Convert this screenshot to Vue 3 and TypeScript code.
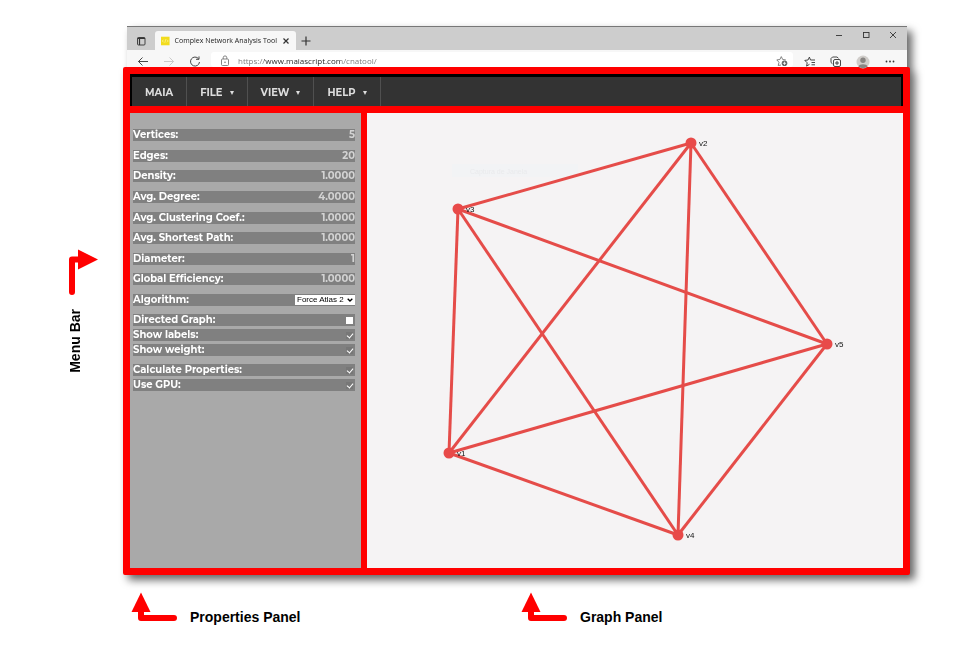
<script setup lang="ts">
import { reactive, ref } from 'vue'

interface Vertex { id: string; x: number; y: number }

const menus: string[] = ['File', 'View', 'Help']

const stats = [
  { label: 'Vertices:', value: '5' },
  { label: 'Edges:', value: '20' },
  { label: 'Density:', value: '1.0000' },
  { label: 'Avg. Degree:', value: '4.0000' },
  { label: 'Avg. Clustering Coef.:', value: '1.0000' },
  { label: 'Avg. Shortest Path:', value: '1.0000' },
  { label: 'Diameter:', value: '1' },
  { label: 'Global Efficiency:', value: '1.0000' },
]

const algorithm = ref('Force Atlas 2')

const optionGroups = reactive([
  [
    { id: 'directed', label: 'Directed Graph:', on: false },
    { id: 'labels', label: 'Show labels:', on: true },
    { id: 'weight', label: 'Show weight:', on: true },
  ],
  [
    { id: 'calculate', label: 'Calculate Properties:', on: true },
    { id: 'gpu', label: 'Use GPU:', on: true },
  ],
])

const vertices: Vertex[] = [
  { id: 'v1', x: 82, y: 340 },
  { id: 'v2', x: 324, y: 30 },
  { id: 'v3', x: 91, y: 96 },
  { id: 'v4', x: 311, y: 422 },
  { id: 'v5', x: 460, y: 231 },
]

// Complete graph: every pair of vertices is joined
const edges = vertices.flatMap((a, i) => vertices.slice(i + 1).map((b) => ({ a, b })))
</script>

<template>
  <main class="figure">
    <div class="side-callout">
      <svg width="32" height="48" viewBox="0 0 32 48" aria-hidden="true">
        <path d="M5 43V10.500H14" class="shaft" />
        <path d="M11 0.500L31 10.500L11 20.500Z" class="head" />
      </svg>
      <span class="caption vertical">Menu Bar</span>
    </div>

    <div class="window">
      <header class="chrome">
        <div class="tabstrip">
          <button class="icon-btn tab-actions" aria-label="Tab actions">
            <svg width="10" height="10" viewBox="0 0 10 10"><rect x="1.500" y="1.500" width="7.500" height="7.500" rx="1" class="line" /><path d="M1.500 2.300H9M3.500 3V9" class="line bold" /></svg>
          </button>
          <div class="tab">
            <svg width="10" height="10" viewBox="0 0 10 10" aria-hidden="true"><rect width="10" height="10" fill="#f2dc1e" /><path d="M3 3.500L1.500 5L3 6.500M7 3.500L8.500 5L7 6.500M5.500 3L4.500 7" stroke="#fff7a8" fill="none" stroke-width=".8" /></svg>
            <span class="tab-title">Complex Network Analysis Tool</span>
            <button class="icon-btn" aria-label="Close tab">
              <svg width="8" height="8" viewBox="0 0 8 8"><path d="M1.500 1.500L6.500 6.500M6.500 1.500L1.500 6.500" class="line bold" /></svg>
            </button>
          </div>
          <button class="icon-btn" aria-label="New tab">
            <svg width="10" height="10" viewBox="0 0 10 10"><path d="M5 .5V9.500M.5 5H9.500" class="line bold" /></svg>
          </button>
          <div class="window-buttons">
            <button class="icon-btn" aria-label="Minimize"><svg width="8" height="8" viewBox="0 0 8 8"><path d="M1 4.500H7" class="line" /></svg></button>
            <button class="icon-btn" aria-label="Maximize"><svg width="8" height="8" viewBox="0 0 8 8"><rect x="1.500" y="1.500" width="5.500" height="5" class="line" /></svg></button>
            <button class="icon-btn" aria-label="Close"><svg width="8" height="8" viewBox="0 0 8 8"><path d="M1 1L7 7M7 1L1 7" class="line" /></svg></button>
          </div>
        </div>
        <div class="toolbar">
          <div class="nav">
            <button class="icon-btn" aria-label="Back"><svg width="12" height="12" viewBox="0 0 12 12"><path d="M11 5.500H1.500M5.500 1.500L1.500 5.500L5.500 9.500" class="line" /></svg></button>
            <button class="icon-btn faded" aria-label="Forward"><svg width="12" height="12" viewBox="0 0 12 12"><path d="M1 5.500H10.500M6.500 1.500L10.500 5.500L6.500 9.500" class="line" /></svg></button>
            <button class="icon-btn" aria-label="Refresh"><svg width="12" height="12" viewBox="0 0 12 12"><path d="M10.500 6A4.500 4.500 0 1 1 9.500 2.700M10 .4V3.300H7" class="line" /></svg></button>
          </div>
          <div class="address">
            <svg width="10" height="12" viewBox="0 0 10 12" aria-hidden="true"><rect x="1.500" y="4" width="7" height="6.500" rx="1" class="line soft" /><path d="M3.200 4V2.700A1.800 1.800 0 0 1 6.800 2.700V4" class="line soft" /><circle cx="5" cy="7.200" r=".8" fill="#777" /></svg>
            <input class="url" aria-label="Address" value="https://www.maiascript.com/cnatool/" />
            <button class="icon-btn" aria-label="Add to favorites"><svg width="12" height="12" viewBox="0 0 12 12"><path d="M5 10L2.200 10.500L3 7.300L.8 4.900L3.900 4.500L5.300 1.600L6.700 4.500L9.800 4.900" class="line soft" /><circle cx="8.500" cy="8.300" r="2.800" fill="#666" /><path d="M8.500 6.700V9.900M6.900 8.300H10.100" stroke="#fff" stroke-width=".8" /></svg></button>
          </div>
          <div class="tools">
            <button class="icon-btn" aria-label="Favorites"><svg width="12" height="12" viewBox="0 0 12 12"><path d="M5.500 8.300L2.600 10.100L3.200 6.800L.8 4.400L4 4L5.400 1.100L6.500 4H11M7.500 6.500H11M7.500 8.800H11" class="line" /></svg></button>
            <button class="icon-btn" aria-label="Collections"><svg width="12" height="12" viewBox="0 0 12 12"><path d="M2.500 7.800L1 6.500V2.500L2.500 1H7L8.500 2.300" class="line" /><rect x="3.500" y="3.500" width="7" height="7" rx="1.500" class="line" /><path d="M7 5V9M5 7H9" class="line" /></svg></button>
            <button class="icon-btn" aria-label="Profile"><svg width="14" height="14" viewBox="0 0 14 14"><circle cx="7" cy="7" r="6.500" fill="#d0cdca" /><circle cx="7" cy="5.300" r="2.700" fill="#888583" /><path d="M2.500 11.500C3 8.500 11 8.500 11.500 11.500A6.500 6.500 0 0 1 2.500 11.500" fill="#888583" /></svg></button>
            <button class="icon-btn" aria-label="Settings"><svg width="12" height="12" viewBox="0 0 12 12"><g fill="#333"><circle cx="2.500" cy="5.500" r=".9" /><circle cx="6" cy="5.500" r=".9" /><circle cx="9.500" cy="5.500" r=".9" /></g></svg></button>
          </div>
        </div>
      </header>

      <div class="frame">
        <nav class="menubar">
          <a class="menu-item" href="#">MAIA</a>
          <button v-for="m in menus" :key="m" class="menu-item">{{ m.toUpperCase() }}<i class="caret"></i></button>
        </nav>

        <div class="workspace">
          <aside class="properties">
            <div class="stats">
              <dl v-for="s in stats" :key="s.label" class="row">
                <dt>{{ s.label }}</dt>
                <dd>{{ s.value }}</dd>
              </dl>
              <div class="row">
                <label for="algorithm">Algorithm:</label>
                <span class="select-wrap">
                  <select id="algorithm" v-model="algorithm">
                    <option>Force Atlas 2</option>
                  </select>
                  <svg class="chevron" width="6" height="4" viewBox="0 0 6 4" aria-hidden="true"><path d="M.7 .7L3 3L5.300 .7" /></svg>
                </span>
              </div>
            </div>
            <div v-for="(group, i) in optionGroups" :key="i" class="options">
              <div v-for="o in group" :key="o.id" class="row">
                <label :for="o.id">{{ o.label }}</label>
                <input :id="o.id" v-model="o.on" type="checkbox" />
              </div>
            </div>
          </aside>

          <section class="graph" aria-label="Graph">
            <svg viewBox="0 0 536 455">
              <rect x="85" y="51" width="126" height="13" fill="#f2f3f5" />
              <text x="103" y="61" class="ghost">Captura de Janela</text>
              <line v-for="e in edges" :key="e.a.id + e.b.id" :x1="e.a.x" :y1="e.a.y" :x2="e.b.x" :y2="e.b.y" class="edge" />
              <g v-for="v in vertices" :key="v.id">
                <circle :cx="v.x" :cy="v.y" r="5.500" class="node" />
                <text :x="v.x + 8" :y="v.y + 3" class="node-label">{{ v.id }}</text>
              </g>
            </svg>
          </section>
        </div>
      </div>
    </div>

    <div class="bottom-callouts">
      <div v-for="name in ['Properties Panel', 'Graph Panel']" :key="name" class="callout">
        <svg width="47" height="30" viewBox="0 0 47 30" aria-hidden="true">
          <path d="M10 18V26H43" class="shaft" />
          <path d="M0.500 20L10 0.500L19.500 20Z" class="head" />
        </svg>
        <span class="caption">{{ name }}</span>
      </div>
    </div>
  </main>
</template>

<style>
body {
  margin: 0;
  background: #fff;
}
</style>

<style scoped>
* {
  box-sizing: border-box;
}
.figure {
  display: grid;
  grid-template-columns: 70px 1fr;
  padding: 26px 67px 24px 53px;
  font-family: 'Liberation Sans', Arial, sans-serif;
}
.caption {
  font-size: 14px;
  line-height: 16px;
  font-weight: bold;
  color: #000;
  white-space: nowrap;
}
.shaft {
  fill: none;
  stroke: #f00;
  stroke-width: 6px;
  stroke-linecap: round;
  stroke-linejoin: round;
}
.head {
  fill: #f00;
}
.side-callout {
  display: flex;
  flex-direction: column;
  align-items: flex-start;
  gap: 12px;
  padding: 223px 0 0 14px;
}
.vertical {
  writing-mode: vertical-rl;
  transform: rotate(180deg);
}
.window {
  min-width: 0;
  filter: drop-shadow(5px 5px 4px rgba(0, 0, 0, 0.6));
}
button {
  border: 0;
  padding: 0;
  background: none;
  font: inherit;
  color: inherit;
}
.icon-btn {
  display: flex;
  align-items: center;
  justify-content: center;
}
.line {
  fill: none;
  stroke: #333;
  stroke-width: 0.9;
}
.line.bold {
  stroke-width: 1.2;
}
.line.soft {
  stroke: #777;
}
.faded {
  opacity: 0.25;
}

/* Browser chrome */
.chrome {
  margin: 0 3px 0 4px;
  font-family: 'Open Sans', 'Noto Sans', sans-serif;
  border-top: 1px solid #777;
  background: #f7f7f7;
}
.tabstrip {
  display: flex;
  align-items: flex-end;
  height: 23px;
  gap: 5px;
  background: #cdcdcd;
}
.tabstrip > .icon-btn {
  height: 19px;
}
.tab-actions {
  margin: 0 4px 0 9px;
}
.tab {
  display: flex;
  align-items: center;
  gap: 5px;
  height: 19px;
  width: 141px;
  padding: 0 6px;
  border-radius: 3px 3px 0 0;
  background: #f7f7f7;
}
.tab-title {
  flex: 1;
  font-size: 7px;
  line-height: 10px;
  color: #222;
  white-space: nowrap;
}
.window-buttons {
  display: flex;
  align-self: flex-start;
  gap: 19px;
  margin-left: auto;
  padding: 4px 10px 0 0;
}
.toolbar {
  display: flex;
  height: 17px;
}
.nav {
  display: flex;
  gap: 14px;
  padding: 6px 10px 0;
  width: 84px;
}
.nav .icon-btn,
.tools .icon-btn {
  height: 12px;
}
.address {
  display: flex;
  flex: 1;
  align-items: center;
  gap: 8px;
  height: 15px;
  margin-top: 2px;
  padding: 3px 5px 0 9px;
  border-radius: 3px;
  background: #fff;
}
.url {
  flex: 1;
  min-width: 0;
  border: 0;
  padding: 0;
  outline: 0;
  font: 8px/12px 'Open Sans', 'Noto Sans', sans-serif;
  color: transparent;
  background: linear-gradient(to right, #777 26px, #222 26px 103px, #777 103px);
  background-clip: text;
}
.tools {
  display: flex;
  gap: 14px;
  padding: 6px 11px 0;
}

/* Highlighted application area */
.frame {
  border: 7px solid #f00;
  border-radius: 2px;
  background: #f00;
}
.menubar {
  display: flex;
  height: 32px;
  border: solid #000;
  border-width: 3px 2px 0;
  background: #333;
  font: bold 10px/27px Montserrat, Inter, sans-serif;
  color: #ddd;
}
.menu-item {
  display: flex;
  align-items: center;
  gap: 7px;
  padding: 2px 13px 0;
  border-right: 1px solid #505050;
  color: inherit;
  text-decoration: none;
}
.caret {
  border: 2px solid transparent;
  border-top: 4px solid #ddd;
  border-bottom: 0;
}
.workspace {
  display: grid;
  grid-template-columns: 231px 1fr;
  gap: 6px;
  margin-top: 7px;
}
.properties {
  padding: 16px 6px 16px 3px;
  background: #a9a9a9;
  font: bold 10px/12px Montserrat, Inter, sans-serif;
  color: #fff;
}
.stats {
  display: flex;
  flex-direction: column;
  justify-content: space-between;
  height: 177px;
}
.options {
  display: flex;
  flex-direction: column;
  gap: 3px;
  margin-top: 8px;
}
.row {
  display: flex;
  align-items: center;
  justify-content: space-between;
  height: 12px;
  margin: 0;
  background: #808080;
}
.row dd {
  margin: 0;
  color: #d3d3d3;
}
.select-wrap {
  display: grid;
  align-items: center;
  width: 60px;
}
.select-wrap > * {
  grid-area: 1 / 1;
}
select {
  appearance: none;
  height: 10px;
  width: 100%;
  padding: 0 0 0 2px;
  border: 0;
  border-radius: 0;
  background: #fff;
  color: #000;
  font: 8px/10px 'Liberation Sans', Arial, sans-serif;
}
.chevron {
  justify-self: end;
  margin-right: 2px;
  fill: none;
  stroke: #000;
  stroke-width: 1.3;
  pointer-events: none;
}
input[type='checkbox'] {
  appearance: none;
  display: flex;
  align-items: flex-start;
  justify-content: center;
  width: 7px;
  height: 7px;
  margin: 0 2px;
  line-height: 0;
  background: #fff;
}
input[type='checkbox']:checked {
  background: #777;
}
input[type='checkbox']:checked::before {
  content: '';
  display: block;
  box-sizing: border-box;
  width: 4px;
  height: 6px;
  border: solid #fff;
  border-width: 0 1px 1px 0;
  transform: rotate(40deg);
}
.graph {
  min-width: 0;
  background: #f5f3f4;
}
.graph svg {
  display: block;
  width: 100%;
  height: auto;
}
.edge {
  stroke: #e54c49;
  stroke-width: 3;
}
.node {
  fill: #e84a49;
}
.node-label {
  font-size: 8px;
  fill: #111;
}
.ghost {
  font-size: 7px;
  fill: #e9eaec;
}

/* Panel captions */
.bottom-callouts {
  grid-column: 2;
  display: grid;
  grid-template-columns: 390px 1fr;
  padding: 17px 0 0 8px;
}
.callout {
  display: flex;
  align-items: flex-end;
  gap: 12px;
}
.callout .caption {
  line-height: 10px;
}
</style>
